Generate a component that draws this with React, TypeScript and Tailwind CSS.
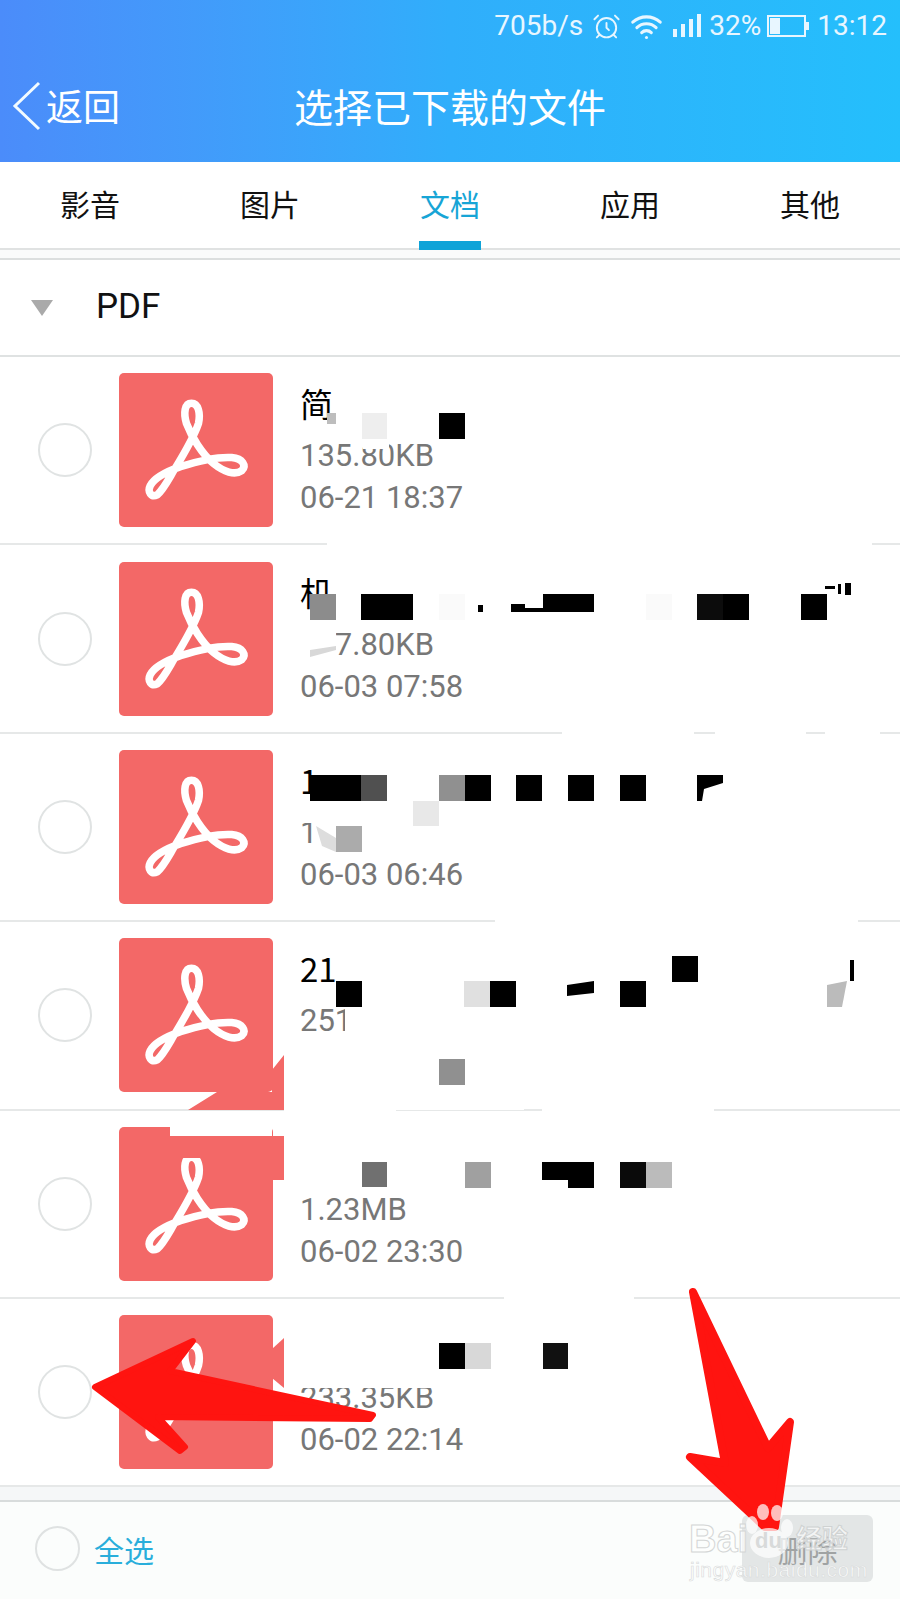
import { AlarmClock, Wifi } from 'lucide-react'

const cjk = "font-['Noto_Sans_CJK_SC','Noto_Sans',sans-serif]"

const tabs = ['影音', '图片', '文档', '应用', '其他']

const files = [
  { name: '简', size: '135.80KB', date: '06-21 18:37' },
  { name: '机', size: '137.80KB', date: '06-03 07:58' },
  { name: '1', size: '1', date: '06-03 06:46' },
  { name: '21', size: '251', date: '' },
  { name: '', size: '1.23MB', date: '06-02 23:30' },
  { name: '', size: '233.35KB', date: '06-02 22:14' },
]

// mosaic squares left by the redaction: x, y, w, h, colour
const mosaic: [number, number, number, number, string][] = [
  [327, 413, 9, 11, '#bdbdbd'], [362, 413, 25, 26, '#eeeeee'], [439, 413, 26, 26, '#000000'],
  [310, 594, 26, 26, '#8c8c8c'], [361, 594, 52, 26, '#000000'], [439, 594, 26, 26, '#fafafa'],
  [543, 594, 51, 18, '#000000'], [697, 594, 26, 26, '#0c0c0c'], [723, 594, 26, 26, '#000000'],
  [801, 594, 26, 26, '#000000'], [646, 594, 26, 26, '#fafafa'],
  [511, 604, 14, 8, '#000000'], [525, 608, 18, 4, '#000000'], [478, 605, 5, 7, '#000000'],
  [825, 586, 10, 3, '#000000'], [838, 584, 3, 10, '#000000'], [845, 583, 6, 12, '#000000'],
  [310, 775, 51, 26, '#000000'], [361, 775, 26, 26, '#505050'], [439, 775, 26, 26, '#909090'],
  [465, 775, 26, 26, '#000000'], [516, 775, 26, 26, '#000000'], [568, 775, 26, 26, '#000000'],
  [620, 775, 26, 26, '#000000'], [413, 801, 26, 25, '#e8e8e8'], [336, 826, 26, 26, '#ababab'],
  [336, 981, 26, 26, '#000000'], [464, 981, 26, 26, '#e0e0e0'], [490, 981, 26, 26, '#000000'],
  [620, 981, 26, 26, '#000000'], [672, 956, 26, 26, '#000000'],
  [850, 960, 4, 21, '#000000'], [439, 1059, 26, 26, '#909090'],
  [362, 1162, 25, 25, '#707070'], [465, 1162, 26, 26, '#a0a0a0'], [542, 1162, 52, 18, '#000000'],
  [568, 1180, 26, 8, '#000000'], [620, 1162, 26, 26, '#0a0a0a'], [646, 1162, 26, 26, '#bbbbbb'],
  [439, 1343, 26, 26, '#000000'], [465, 1343, 26, 26, '#d8d8d8'], [543, 1343, 25, 26, '#111111'],
]

// white patches that wipe parts of the rows
const wipes: [number, number, number, number][] = [
  [333, 385, 140, 55], [363, 439, 26, 10], [327, 538, 545, 30],
  [336, 570, 550, 24], [336, 594, 25, 26], [413, 594, 130, 10], [594, 594, 210, 28], [298, 622, 38, 36],
  [562, 728, 132, 8], [715, 728, 91, 8], [825, 728, 55, 8], [322, 750, 460, 25], [298, 801, 115, 22], [316, 826, 20, 26],
  [495, 916, 363, 10], [336, 940, 336, 41], [345, 1007, 100, 52], [298, 1050, 141, 36],
  [284, 1040, 240, 70], [284, 1103, 112, 12], [542, 1103, 172, 12],
  [284, 1115, 500, 47], [170, 1121, 102, 15], [284, 1115, 16, 65], [504, 1292, 130, 10],
  [284, 1304, 500, 39], [298, 1369, 150, 19],
]

function PdfIcon() {
  return (
    <div className="h-[154px] w-[154px] shrink-0 rounded-[5px] bg-[#f36867]">
      <svg viewBox="0 0 153 153" className="h-full w-full" fill="none">
        <path
          d="M72 30 C79 30 81 40 79 50 C75 62 66 78 55 96 C49 106 44 116 38 121 C32 124 28 118 31 112 C35 104 47 98 61 93 C77 88 96 83 112 84 C123 85 127 92 122 97 C115 102 104 98 94 90 C82 80 72 63 67 50 C64 40 65 30 72 30 Z"
          stroke="#ffffff"
          strokeWidth="7.5"
          strokeLinejoin="round"
        />
      </svg>
    </div>
  )
}

function FileRow({ file }: { file: (typeof files)[number] }) {
  return (
    <div className="flex h-[188.4px] items-center border-b-2 border-[#e6e8e8]">
      <div className="ml-[38px] h-[54px] w-[54px] shrink-0 rounded-full border-2 border-[#e0e3e3]" />
      <div className="ml-[27px]">
        <PdfIcon />
      </div>
      <div className="ml-[27px] flex h-[154px] flex-col">
        <div className={`mt-[8px] h-[44px] text-[33px] leading-[44px] text-black ${cjk}`}>{file.name}</div>
        <div className="mt-[10px] h-[42px] font-['Roboto',sans-serif] text-[31px] leading-[42px] text-[#777777]">{file.size}</div>
        <div className="h-[42px] font-['Roboto',sans-serif] text-[31px] leading-[42px] text-[#777777]">{file.date}</div>
      </div>
    </div>
  )
}

export default function App() {
  return (
    <div className="relative h-[1600px] w-[900px] overflow-hidden bg-white">
      <header className="h-[162px] bg-linear-to-r from-[#4b8cfa] via-[#30aefb] to-[#24bffc] text-white">
        <div className="flex h-[52px] items-center justify-end pr-[13px] font-['Roboto',sans-serif] text-[28px] text-[#e8f6ff]">
          <span>705b/s</span>
          <AlarmClock className="ml-[9px] h-[29px] w-[29px]" strokeWidth={1.6} />
          <Wifi className="ml-[9px] h-[33px] w-[33px]" strokeWidth={2.2} />
          <svg viewBox="0 0 28 24" className="ml-[10px] h-[26px] w-[28px]" fill="currentColor">
            <rect x="0" y="15" width="4" height="8" />
            <rect x="8" y="10" width="4" height="13" />
            <rect x="16" y="5" width="4" height="18" />
            <rect x="24" y="0" width="4" height="23" />
          </svg>
          <span className="ml-[8px]">32%</span>
          <svg viewBox="0 0 42 24" className="ml-[6px] h-[24px] w-[42px]" fill="none">
            <rect x="1" y="2" width="37" height="20" stroke="currentColor" strokeWidth="2" />
            <rect x="3" y="4" width="10" height="16" fill="currentColor" />
            <rect x="39" y="8" width="3" height="8" fill="currentColor" />
          </svg>
          <span className="ml-[8px]">13:12</span>
        </div>
        <div className={`grid h-[110px] grid-cols-[1fr_auto_1fr] items-center pb-[3px] ${cjk}`}>
          <div className="flex items-center">
            <svg viewBox="0 0 30 50" className="ml-[12px] h-[50px] w-[30px]" fill="none">
              <polyline points="27,2 3,25 27,48" stroke="#f2fbff" strokeWidth="3" />
            </svg>
            <span className="ml-[4px] text-[37px] leading-none">返回</span>
          </div>
          <div className="text-[39px] leading-none">选择已下载的文件</div>
          <div />
        </div>
      </header>

      <nav className={`grid h-[88px] grid-cols-5 border-b-2 border-[#e0e2e2] ${cjk}`}>
        {tabs.map((tab) => (
          <div key={tab} className="relative flex items-center justify-center pb-[4px] text-[30px] leading-none">
            <span className={tab === '文档' ? 'text-[#17a5d6]' : 'text-[#111111]'}>{tab}</span>
            {tab === '文档' && <div className="absolute -bottom-[2px] left-[59px] h-[9px] w-[62px] bg-[#0fa3d8]" />}
          </div>
        ))}
      </nav>

      <div className="h-[10px] border-b-2 border-[#dcdfdf] bg-[#fafbfb]" />

      <div className="flex h-[97px] items-center border-b-2 border-[#dfe2e2]">
        <div className="ml-[31px] h-0 w-0 border-x-[11px] border-t-[16px] border-x-transparent border-t-[#aaaaaa]" />
        <span className="ml-[43px] font-['Roboto',sans-serif] text-[35px] text-[#111111]">PDF</span>
      </div>

      {files.map((file, i) => (
        <FileRow key={i} file={file} />
      ))}

      <div className="h-[15px] border-b-2 border-[#d8dcdc] bg-[#f5f7f8]" />

      <footer className={`flex h-[97px] items-center justify-between bg-[#fbfdfc] pb-[4px] ${cjk}`}>
        <div className="flex items-center">
          <div className="ml-[35px] h-[45px] w-[45px] rounded-full border-2 border-[#dfe2e2]" />
          <span className="ml-[14px] text-[30px] leading-none text-[#29aedb]">全选</span>
        </div>
        <div className="mr-[27px] flex h-[67px] w-[131px] items-center justify-center rounded-[6px] bg-[#e3e6e6] text-[30px] leading-none text-[#a0a3a3]">
          删除
        </div>
      </footer>

      <svg viewBox="0 0 900 1600" className="absolute inset-0 h-[1600px] w-[900px]">
        {wipes.map(([x, y, w, h], i) => (
          <rect key={i} x={x} y={y} width={w} height={h} fill="#ffffff" />
        ))}
        {mosaic.map(([x, y, w, h, c], i) => (
          <rect key={i} x={x} y={y} width={w} height={h} fill={c} />
        ))}
        <polygon points="697,801 697,775 723,775 723,783 704,789 702,801" fill="#000000" />
        <polygon points="567,985 594,981 594,993 567,996" fill="#000000" />
        <polygon points="827,1007 827,985 847,981 842,1007" fill="#bbbbbb" />
        <polygon points="310,657 310,650 336,646 336,650" fill="#d8d8d8" />
        <polygon points="316,826 336,838 336,852 322,846" fill="#dddddd" />
        <polygon points="272,1070 284,1055 284,1110 188,1110 217,1092 272,1092" fill="#f36867" />
        <rect x="170" y="1136" width="114" height="22" fill="#f36867" />
        <rect x="272" y="1158" width="12" height="22" fill="#f36867" />
        <polygon points="272,1349 284,1338 284,1388 272,1378" fill="#f36867" />
        <polygon
          points="95,1387 193,1341 170,1371 373,1415 370,1419 158,1417 185,1447 180,1451"
          fill="#ff1410"
          stroke="#ff1410"
          strokeWidth="6"
          strokeLinejoin="round"
        />
        <polygon
          points="693,1292 768,1448 790,1422 775,1527 765,1527 690,1457 725,1463"
          fill="#ff1410"
          stroke="#ff1410"
          strokeWidth="8"
          strokeLinejoin="round"
        />
        <g fill="#ffffff" opacity="0.72">
          <ellipse cx="763" cy="1512" rx="6" ry="8" />
          <ellipse cx="777" cy="1513" rx="6" ry="8" />
          <ellipse cx="752" cy="1525" rx="6" ry="9" />
          <ellipse cx="787" cy="1528" rx="6" ry="9" />
          <ellipse cx="769" cy="1543" rx="19" ry="15" />
        </g>
      </svg>

      {/* watermark */}
      <div className="absolute left-[689px] top-[1520px] font-['Liberation_Sans',sans-serif] text-[38px] font-bold leading-none text-white/60 [-webkit-text-stroke:1px_#d4d6d6]">
        Bai
      </div>
      <div className="absolute left-[755px] top-[1530px] font-['Liberation_Sans',sans-serif] text-[22px] font-bold leading-none text-[#d8dada]">
        du
      </div>
      <div className={`absolute left-[796px] top-[1524px] text-[26px] font-bold leading-none text-white/60 [-webkit-text-stroke:1px_#cfd2d2] ${cjk}`}>
        经验
      </div>
      <div className="absolute left-[690px] top-[1559px] font-['Liberation_Sans',sans-serif] text-[21px] leading-none tracking-[0.5px] text-white/80 [-webkit-text-stroke:0.6px_#d8dada]">
        jingyan.baidu.com
      </div>
    </div>
  )
}
